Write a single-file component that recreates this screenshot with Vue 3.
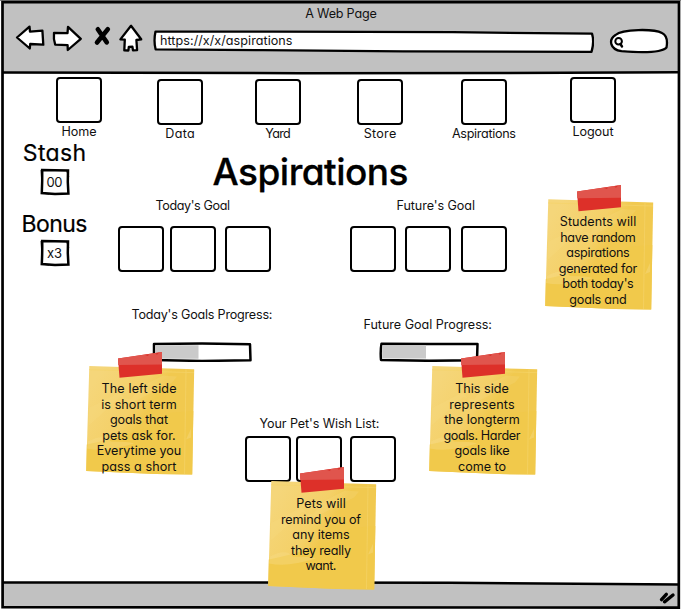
<script setup>
// Spreads the letters of an element so that its text spans the given width.
const vSpan = {
  mounted(el, { value }) {
    const gaps = el.textContent.length - 1
    const spacing = (value - el.getBoundingClientRect().width) / gaps
    el.style.letterSpacing = spacing + 'px'
    el.style.marginRight = -spacing + 'px'
  }
}

const nav = [
  { label: 'Home', width: 35, raised: true },
  { label: 'Data', width: 29.5 },
  { label: 'Yard', width: 25.5 },
  { label: 'Store', width: 32.5 },
  { label: 'Aspirations', width: 64 },
  { label: 'Logout', width: 41, raised: true }
]

const stats = [
  { label: 'Stash', width: 63.5, value: '00', valueWidth: 16 },
  { label: 'Bonus', width: 66, value: 'x3', valueWidth: 15 }
]

const notes = [
  {
    id: 'students',
    lines: [['Students will', 76.5], ['have random', 75.5], ['aspirations', 63.5], ['generated for', 78.5], ["both today's", 71.5], ['goals and', 57.5]]
  },
  {
    id: 'left',
    lines: [['The left side', 75], ['is short term', 75.5], ['goals that', 58], ['pets ask for.', 73.5], ['Everytime you', 84.5], ['pass a short', 75]]
  },
  {
    id: 'right',
    lines: [['This side', 53.5], ['represents', 65.5], ['the longterm', 75.5], ['goals. Harder', 77], ['goals like', 55], ['come to', 48]]
  },
  {
    id: 'pets',
    lines: [['Pets will', 49.5], ['remind you of', 80], ['any items', 57.5], ['they really', 60], ['want.', 31]]
  }
]
</script>

<template>
  <div class="window">
    <svg class="frame" viewBox="0 0 681 610">
      <path class="strip" d="M0 0.5H681" />
      <path class="bar" d="M2.5 2.5H679V73H2.5Z" />
      <path class="bar" d="M2.5 582.5L450 582.8L679 585V607.5H2.5Z" />
      <path class="edge" d="M2.5 2.2L679 2L678.8 607.6L2.6 607.2Z" />
      <path class="rule" d="M2 72.6L300 73.2L500 73L679 72.3" />
      <path class="rule" d="M2 582.4L450 582.7L679 584.6" />
      <path class="grip" d="M661.5 599.6L666.3 594.3M664.5 601.8L673 595" />
    </svg>

    <header class="browser">
      <h2 class="caption"><span v-span="71.5" class="text">A Web Page</span></h2>
      <div class="toolbar">
        <svg class="buttons" viewBox="0 0 130 32">
          <path class="icon" d="M2 15.5L14.5 4.6L15 9.7L27.4 8.6L28.3 22.7L15.2 22L14.8 26.5Z" />
          <path class="icon" d="M39 11L52.5 11.2L53 4.8L65.8 16.8L52.8 28L52.6 23.2L40.2 22.7Q38.3 17 39 11Z" />
          <path class="cross" d="M82.8 7.3L91.8 20.4M92.8 7.3L82 20.5" />
          <path class="icon" d="M116 3.8L105.4 17.4L109.8 17.6L109.3 28.4L113.4 28.5L113.8 24.8L117.4 24.7L118 28.3L122.1 28.1L121.4 18L126.2 17.3Z" />
        </svg>
        <div class="address">
          <svg class="outline" viewBox="0 0 441 24">
            <path class="field" d="M2.5 2.6Q70 2.6 120 2.6L300 3.2L439 4.7Q441.5 13 438.5 22.8L250 22.3L110 21.2L2.6 20.3Q.5 12 2.5 2.6Z" />
          </svg>
          <span v-span="132.5" class="text url">https://x/x/aspirations</span>
        </div>
        <svg class="search" viewBox="0 0 60 28">
          <path class="field" d="M12.5 23.2C.5 21.5 -.5 11.5 6.5 7C13.5 .8 45 .7 53 5C58 7.5 58.5 14 57.5 19.5C53.5 24 36 25 12.5 23.2" />
          <circle class="lens" cx="9.6" cy="13.2" r="3.3" />
          <path class="handle" d="M11.4 16L13 18.5" />
        </svg>
      </div>
    </header>

    <nav class="nav">
      <a v-for="item in nav" :key="item.label" class="nav-item" :class="{ raised: item.raised }">
        <span class="box"></span>
        <span v-span="item.width" class="text">{{ item.label }}</span>
      </a>
    </nav>

    <div class="body">
      <aside class="stats">
        <section v-for="stat in stats" :key="stat.label" class="stat">
          <h3 v-span="stat.width" class="stat-label">{{ stat.label }}</h3>
          <div class="stat-value">
            <svg class="outline" viewBox="0 0 30 28">
              <path class="stat-frame" d="M2.2 2L15 2.3L28 2.5L27.8 14L28.4 25.6L15 26L1.8 25Q2.4 13 2.2 2Z" />
              <path class="stat-scratch" d="M1 25L9 26M27 3L28.7 9M1.2 2L1.7 12" />
            </svg>
            <span v-span="stat.valueWidth" class="text">{{ stat.value }}</span>
          </div>
        </section>
      </aside>

      <main class="board">
        <h1 class="title"><span v-span="196" class="text">Aspirations</span></h1>

        <div class="goals">
          <section class="goal today">
            <span v-span="74.5" class="text label">Today's Goal</span>
            <div class="boxes"><i class="box"></i><i class="box"></i><i class="box"></i></div>
          </section>
          <section class="goal future">
            <span v-span="78.5" class="text label">Future's Goal</span>
            <div class="boxes"><i class="box"></i><i class="box"></i><i class="box"></i></div>
          </section>
        </div>

        <div class="progresses">
          <section class="progress today">
            <span v-span="141" class="text label">Today's Goals Progress:</span>
            <svg class="meter" viewBox="0 0 100 20">
              <path class="track" d="M2 2L50 1.6L98 2.2L98.5 18.2L50 19L2 18Z" />
              <path class="fill" d="M3.2 3.2H46.5V16.8H3.2Z" />
            </svg>
          </section>
          <section class="progress future">
            <span v-span="128.5" class="text label">Future Goal Progress:</span>
            <svg class="meter" viewBox="0 0 100 20">
              <path class="track" d="M2.5 1.8L50 2L98.5 2L98 18.3L50 18.8L2 18Q1.2 9 2.5 1.8Z" />
              <path class="fill" d="M3.2 3.2H47V16.6H3.2Z" />
            </svg>
          </section>
        </div>

        <section class="wishes">
          <span v-span="120" class="text label">Your Pet's Wish List:</span>
          <div class="boxes"><i class="box"></i><i class="box"></i><i class="box"></i></div>
        </section>
      </main>
    </div>

    <article v-for="note in notes" :key="note.id" class="note" :class="note.id">
      <svg class="paper" viewBox="0 0 110 126" preserveAspectRatio="none">
        <defs>
          <linearGradient :id="'shade-' + note.id" x1="0" y1="0.25" x2="0.65" y2="0.65">
            <stop offset="0" stop-color="#f5d67a" />
            <stop offset="0.55" stop-color="#f4d068" />
            <stop offset="0.75" stop-color="#f1c94f" />
          </linearGradient>
        </defs>
        <path :fill="'url(#shade-' + note.id + ')'" d="M3.3 14.2L35 15.2L108.2 17.6L106.2 124.5L70 124L0.2 121Z" />
        <path fill="#f1c94b" d="M0.8 94Q28 88 45 82Q66 77 82 62L107.3 60L106.2 124.5L70 124L0.2 121Z" />
        <path fill="#f6da84" opacity=".25" d="M3 57L34 41L43 53L86 31L91 25L77 24L55 35L45 48L34 46L2.5 75Z" />
        <path fill="#f7dc86" opacity=".4" d="M2 91Q18 82 25 91Q42 91 48 93Q20 102 1 98ZM100 89L105 78L105 87Z" />
        <path fill="none" stroke="#f5d369" stroke-width=".7" d="M100 17.5L98.5 124M3 18L108 21" />
        <path fill="#dd3029" d="M32 6.5L76 0V22.2L33.5 26.2Z" />
        <path fill="#e0554d" d="M32 6.5L76 0V12.8L32.2 13.3Z" />
        <path fill="#d7322b" d="M59 3L63 2.4L62 4ZM69 1.5L73 .8L71 2.7Z" />
      </svg>
      <div class="note-text">
        <p v-for="[line, width] in note.lines" :key="line" class="line">
          <span v-span="width" class="text">{{ line }}</span>
        </p>
      </div>
    </article>
  </div>
</template>

<style>
body {
  margin: 0;
  background: #fff;
}
</style>

<style scoped>
.window {
  position: relative;
  width: 681px;
  height: 610px;
  overflow: hidden;
  color: #111;
  font: 400 12.6px/16px Inter, "Open Sans", sans-serif;
  font-feature-settings: "cv11" 1, "calt" 0;
}

.frame {
  position: absolute;
  inset: 0;
  width: 681px;
  height: 610px;
}

.strip { stroke: #858585; fill: none; }
.bar { fill: #c1c1c1; }
.edge { fill: none; stroke: #000; stroke-width: 2.7; }
.rule { fill: none; stroke: #000; stroke-width: 2.5; }
.grip { fill: none; stroke: #000; stroke-width: 3.4; stroke-linecap: round; }

.text {
  display: inline-block;
  white-space: nowrap;
}

h1, h2, h3, p {
  margin: 0;
  font-weight: inherit;
  font-size: inherit;
}

.browser {
  position: relative;
  box-sizing: border-box;
  height: 74px;
  padding-top: 6px;
}

.caption {
  padding-left: 1px;
  text-align: center;
  line-height: 16px;
}

.toolbar {
  display: flex;
  align-items: flex-start;
  padding-left: 14.5px;
}

.buttons {
  width: 130px;
  height: 32px;
}

.icon { fill: #fff; stroke: #000; stroke-width: 2.3; stroke-linejoin: round; }
.cross { fill: none; stroke: #000; stroke-width: 4.6; stroke-linecap: round; }
.field { fill: #fff; stroke: #000; stroke-width: 2.3; stroke-linejoin: round; }

.address {
  position: relative;
  width: 441px;
  height: 24px;
  margin: 7px 0 0 8.5px;
}

.outline {
  position: absolute;
  inset: 0;
  width: 100%;
  height: 100%;
}

.url {
  position: relative;
  margin: 4px 0 0 7px;
}

.search {
  width: 60px;
  height: 28px;
  margin: 6px 0 0 14.5px;
}

.lens { fill: none; stroke: #000; stroke-width: 2; }
.handle { fill: none; stroke: #000; stroke-width: 2.4; stroke-linecap: round; }

.nav {
  position: relative;
  box-sizing: border-box;
  display: grid;
  grid-template-columns: 101px 98px 102px 104px 109px 64px;
  height: 68px;
  padding: 5px 0 0 47px;
}

.nav-item {
  display: flex;
  flex-direction: column;
  align-items: center;
  gap: 1px;
  width: 64px;
}

.raised { margin-top: -2px; }

.box {
  box-sizing: border-box;
  flex: none;
  width: 46px;
  height: 46px;
  border: 2px solid #000;
  border-radius: 4px;
  background: #fff;
}

.body {
  position: relative;
  display: flex;
}

.stats {
  display: flex;
  flex-direction: column;
  gap: 15px;
  width: 109px;
  margin-top: -2px;
}

.stat {
  display: flex;
  flex-direction: column;
  align-items: center;
  gap: 2px;
}

.stat-label {
  font-size: 23px;
  line-height: 26px;
  white-space: nowrap;
  color: #000;
  -webkit-text-stroke: .2px #000;
}

.stat-value {
  position: relative;
  display: flex;
  justify-content: center;
  align-items: center;
  width: 30px;
  height: 28px;
}

.stat-value .text {
  position: relative;
  font-size: 13px;
}

.stat-frame { fill: #fff; stroke: #000; stroke-width: 2.5; }
.stat-scratch { fill: none; stroke: #000; stroke-width: 1.2; }

.board {
  display: flex;
  flex-direction: column;
  align-items: flex-start;
}

.title {
  margin: 7px 0 0 103.5px;
  font-size: 37px;
  line-height: 46px;
  font-weight: 500;
  color: #000;
  -webkit-text-stroke: .3px #000;
}

.goals {
  display: flex;
  gap: 79px;
  margin: 3px 0 0 9px;
}

.goal {
  display: flex;
  flex-direction: column;
  align-items: flex-start;
  gap: 12px;
}

.goal.today .label { margin-left: 37.5px; }
.goal.future .label { margin-left: 46.5px; }

.boxes { display: flex; }
.today .boxes { gap: 6px; }
.today .box:last-child { margin-left: 3px; }
.future .boxes { gap: 9px; }
.future .box:last-child { margin-left: 1px; }

.progresses {
  display: flex;
  align-items: flex-end;
  margin: 35px 0 0 22.5px;
}

.progress {
  display: flex;
  flex-direction: column;
  align-items: flex-start;
}

.progress.today { gap: 19px; width: 232px; }
.progress.future { gap: 9px; }

.meter {
  width: 100px;
  height: 20px;
}

.today .meter { margin-left: 20.5px; }
.future .meter { margin-left: 15px; }

.track { fill: #fff; stroke: #000; stroke-width: 2.5; stroke-linejoin: round; }
.fill { fill: #cacaca; }

.wishes {
  display: flex;
  flex-direction: column;
  align-items: flex-start;
  gap: 4px;
  margin: 54px 0 0 136px;
}

.wishes .label { margin-left: 14.5px; }
.wishes .boxes { gap: 5px; }
.wishes .box:last-child { margin-left: 3px; }

.note {
  position: absolute;
  width: 110px;
  height: 124px;
}

.students { left: 545px; top: 185px; height: 126px; }
.left { left: 86px; top: 352px; }
.right { left: 429px; top: 352px; }
.pets { left: 268px; top: 467px; }

.paper {
  position: absolute;
  inset: 0;
  width: 110px;
  height: 100%;
}

.note-text {
  position: relative;
  padding: 29px 4px 0 0;
  text-align: center;
}

.line {
  height: 15.6px;
  line-height: 15.6px;
}
</style>
